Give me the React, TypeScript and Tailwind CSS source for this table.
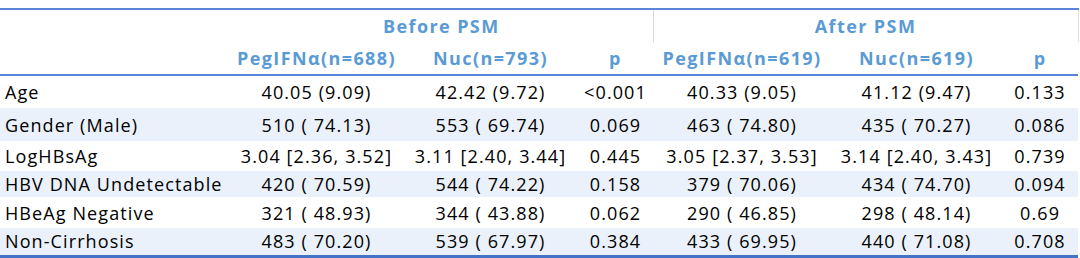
const GROUPS = ['Before PSM', 'After PSM'];

const SUB_HEADERS = [
  'PegIFNα(n=688)',
  'Nuc(n=793)',
  'p',
  'PegIFNα(n=619)',
  'Nuc(n=619)',
  'p',
];

// height tuned per row to match the source image stripes
const ROWS: { label: string; values: string[]; h: string; striped?: boolean }[] = [
  {
    label: 'Age',
    values: ['40.05 (9.09)', '42.42 (9.72)', '<0.001', '40.33 (9.05)', '41.12 (9.47)', '0.133'],
    h: 'h-[33px]',
  },
  {
    label: 'Gender (Male)',
    values: ['510 ( 74.13)', '553 ( 69.74)', '0.069', '463 ( 74.80)', '435 ( 70.27)', '0.086'],
    h: 'h-[33px]',
    striped: true,
  },
  {
    label: 'LogHBsAg',
    values: ['3.04 [2.36, 3.52]', '3.11 [2.40, 3.44]', '0.445', '3.05 [2.37, 3.53]', '3.14 [2.40, 3.43]', '0.739'],
    h: 'h-[30px]',
  },
  {
    label: 'HBV DNA Undetectable',
    values: ['420 ( 70.59)', '544 ( 74.22)', '0.158', '379 ( 70.06)', '434 ( 74.70)', '0.094'],
    h: 'h-[26px]',
    striped: true,
  },
  {
    label: 'HBeAg Negative',
    values: ['321 ( 48.93)', '344 ( 43.88)', '0.062', '290 ( 46.85)', '298 ( 48.14)', '0.69'],
    h: 'h-[31px]',
  },
  {
    label: 'Non-Cirrhosis',
    values: ['483 ( 70.20)', '539 ( 67.97)', '0.384', '433 ( 69.95)', '440 ( 71.08)', '0.708'],
    h: 'h-[28px]',
    striped: true,
  },
];

export default function App() {
  return (
    <div className="h-[258px] w-[1080px] bg-white pt-[8px] font-['Open_Sans',sans-serif] text-[18px] leading-none tracking-[1.1px] text-black">
      <table className="w-[1078px] table-fixed border-collapse">
        <colgroup>
          <col className="w-[230px]" />
          <col className="w-[173px]" />
          <col className="w-[175px]" />
          <col className="w-[75px]" />
          <col className="w-[178px]" />
          <col className="w-[171px]" />
          <col className="w-[76px]" />
        </colgroup>
        <thead>
          <tr className="h-[33px] border-t-2 border-[#5b85d6]">
            <th />
            <th
              colSpan={3}
              className="border-r border-[#d9d9d9] text-center text-[18px] font-bold tracking-[1.4px] text-[#5b9bd5]"
            >
              {GROUPS[0]}
            </th>
            <th
              colSpan={3}
              className="border-r border-[#e3e3e3] text-center text-[18px] font-bold tracking-[1.4px] text-[#5b9bd5]"
            >
              {GROUPS[1]}
            </th>
          </tr>
          <tr className="h-[33px] border-b-2 border-[#5b85d6]">
            <th />
            {SUB_HEADERS.map((h, i) => (
              <th
                key={i}
                className="whitespace-nowrap text-center text-[18px] font-bold tracking-[1.4px] text-[#5b9bd5]"
              >
                {h}
              </th>
            ))}
          </tr>
        </thead>
        <tbody className="border-b-[3px] border-[#4472c4]">
          {ROWS.map((row) => (
            <tr key={row.label} className={`${row.h} ${row.striped ? 'bg-[#eaf1fa]' : 'bg-white'}`}>
              <td className="whitespace-nowrap pl-[5px] text-left">{row.label}</td>
              {row.values.map((v, i) => (
                <td key={i} className="whitespace-pre text-center">
                  {v}
                </td>
              ))}
            </tr>
          ))}
        </tbody>
      </table>
    </div>
  );
}
